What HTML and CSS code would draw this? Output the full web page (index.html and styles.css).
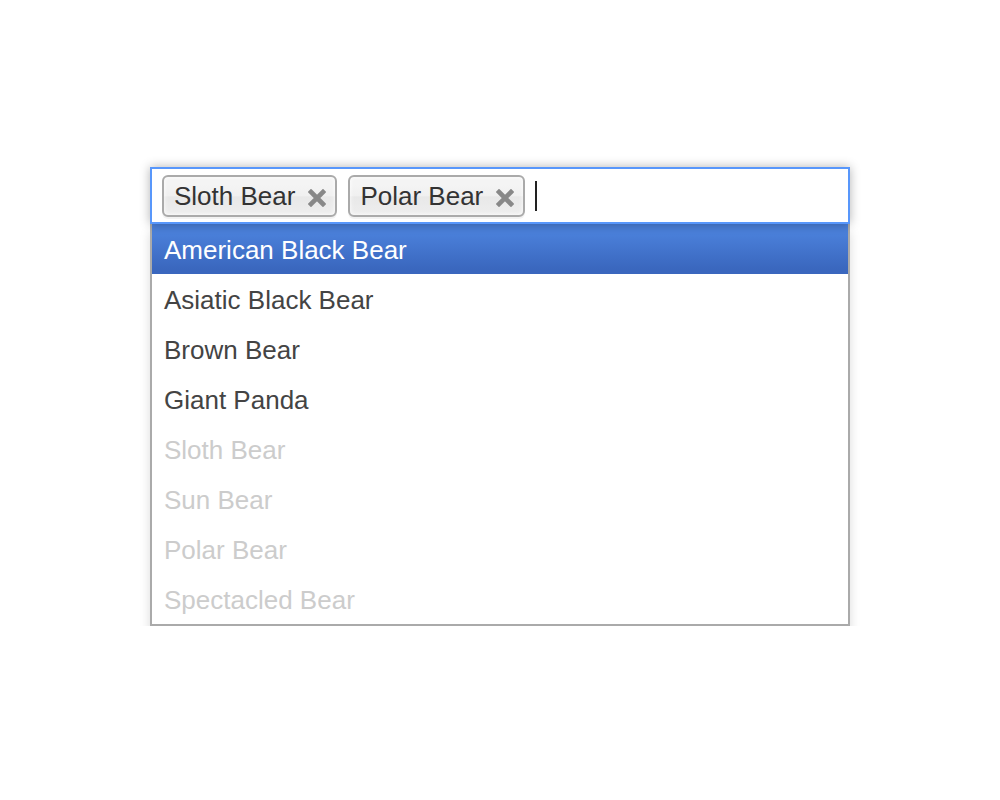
FILE: index.html
```html
<!DOCTYPE html>
<html lang="en">
<head>
<meta charset="utf-8">
<title>Chosen multi select</title>
<link rel="stylesheet" href="styles.css">
</head>
<body>
<div class="chosen">
  <ul class="choices">
    <li class="choice"><span>Sloth Bear</span><svg class="close" viewBox="0 0 18 18" width="18" height="18"><path d="M3 3 L15 15 M15 3 L3 15" /></svg></li>
    <li class="choice"><span>Polar Bear</span><svg class="close" viewBox="0 0 18 18" width="18" height="18"><path d="M3 3 L15 15 M15 3 L3 15" /></svg></li>
    <li class="search-field"><span class="caret"></span></li>
  </ul>
  <div class="drop">
    <ul class="results">
      <li class="result highlighted">American Black Bear</li>
      <li class="result">Asiatic Black Bear</li>
      <li class="result">Brown Bear</li>
      <li class="result">Giant Panda</li>
      <li class="result disabled">Sloth Bear</li>
      <li class="result disabled">Sun Bear</li>
      <li class="result disabled">Polar Bear</li>
      <li class="result disabled">Spectacled Bear</li>
    </ul>
  </div>
</div>
</body>
</html>
```

FILE: styles.css
```css
html, body {
  margin: 0;
  padding: 0;
  background: #fff;
}

body {
  font-family: "Liberation Sans", Arial, Helvetica, sans-serif;
  font-size: 26px;
}

.chosen {
  width: 700px;
  margin: 167px auto 0;
}

.choices {
  list-style: none;
  margin: 0;
  padding: 6px 10px 0;
  height: 47px;
  box-sizing: content-box;
  border: 2px solid #5897fb;
  box-shadow: 0 0 10px rgba(0, 0, 0, 0.3);
  background: #fff;
  display: flex;
  align-items: flex-start;
  position: relative;
  z-index: 2;
}

.choice {
  position: relative;
  margin: 0 11px 0 0;
  padding: 6px 40px 6px 10px;
  height: 26px;
  line-height: 26px;
  border: 2px solid #aaa;
  border-radius: 6px;
  color: #333;
  background-color: #eee;
  background-image: linear-gradient(#f4f4f4 20%, #f0f0f0 50%, #e8e8e8 52%, #eeeeee 100%);
  box-shadow: 0 0 4px #fff inset, 0 2px 0 rgba(0, 0, 0, 0.05);
  white-space: nowrap;
}

.close {
  position: absolute;
  right: 9px;
  top: 12px;
  stroke: #888;
  stroke-width: 4.6;
  stroke-linecap: square;
  fill: none;
}

.search-field {
  height: 42px;
  display: flex;
  align-items: center;
  margin-left: -1px;
}

.caret {
  display: block;
  width: 2px;
  height: 30px;
  background: #222;
}

.drop {
  border: 2px solid #aaa;
  border-top: 0;
  background: #fff;
  box-shadow: 0 8px 10px rgba(0, 0, 0, 0.15);
  position: relative;
  z-index: 1;
}

.results {
  list-style: none;
  margin: 0;
  padding: 0;
}

.result {
  padding: 11px 12px 9px;
  line-height: 30px;
  height: 30px;
  color: #444;
  white-space: nowrap;
}

.result.highlighted {
  color: #fff;
  background-color: #3875d7;
  background-image: linear-gradient(#4a7fd9 20%, #3a67be 90%);
}

.result.disabled {
  color: #ccc;
}
```
